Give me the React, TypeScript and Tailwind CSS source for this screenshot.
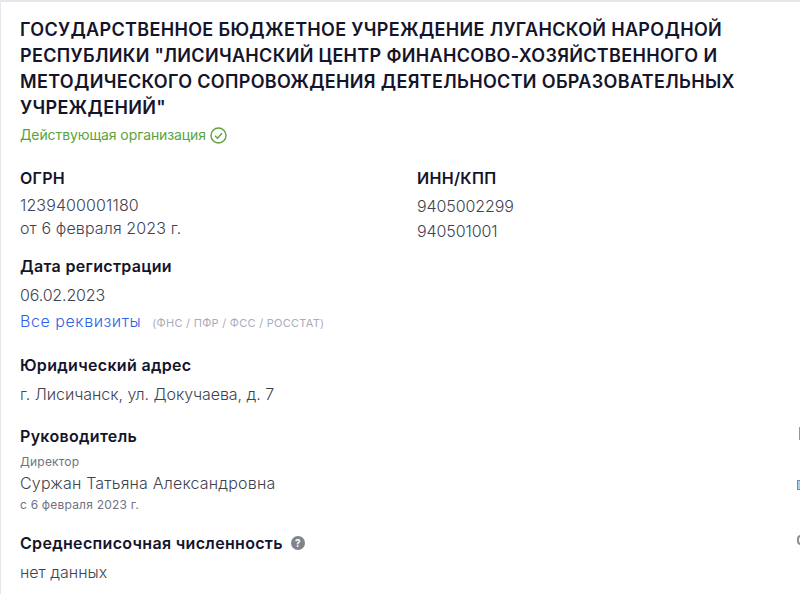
import React from 'react';

const Label: React.FC<{ children: React.ReactNode }> = ({ children }) => (
    <div className="text-[16px] leading-[20px] font-semibold tracking-[0.32px] text-[#14142b]">{children}</div>
);

const Value: React.FC<{ children: React.ReactNode; className?: string }> = ({ children, className }) => (
    <div className={`text-[16px] leading-[25px] font-light text-[#3f4350] ${className ?? ''}`}>{children}</div>
);

export default function App() {
    return (
        <div className="relative h-[594px] w-[800px] overflow-hidden bg-[#e4e7ec] pt-[2px] pl-[1px] font-['Inter',sans-serif]">
            <div className="h-full bg-white pl-[19px] pt-[15px]">
                <h1 className="w-[760px] text-[18px] leading-[26px] font-semibold tracking-[0.33px] text-[#14142b]">
                    ГОСУДАРСТВЕННОЕ БЮДЖЕТНОЕ УЧРЕЖДЕНИЕ ЛУГАНСКОЙ НАРОДНОЙ РЕСПУБЛИКИ "ЛИСИЧАНСКИЙ ЦЕНТР ФИНАНСОВО-ХОЗЯЙСТВЕННОГО И МЕТОДИЧЕСКОГО СОПРОВОЖДЕНИЯ ДЕЯТЕЛЬНОСТИ ОБРАЗОВАТЕЛЬНЫХ УЧРЕЖДЕНИЙ"
                </h1>
                <div className="mt-[4px] flex items-center gap-[4px] text-[14px] leading-[20px] tracking-[-0.1px] text-[#5aa33c]">
                    <span>Действующая организация</span>
                    <svg width="17" height="17" viewBox="0 0 17 17" fill="none" stroke="#5aa33c" strokeWidth="1.4">
                        <circle cx="8.5" cy="8.5" r="7.5" />
                        <path d="M5 8.7l2.5 2.5L12 6.3" />
                    </svg>
                </div>

                <div className="mt-[23px] flex">
                    <div className="w-[397px]">
                        <Label>ОГРН</Label>
                        <div className="mt-[6px] text-[16px] leading-[23px] font-light tracking-[0.12px] text-[#3f4350]">
                            <div>1239400001180</div>
                            <div>от 6 февраля 2023 г.</div>
                        </div>
                    </div>
                    <div>
                        <Label>ИНН/КПП</Label>
                        <div className="mt-[6px] text-[16px] leading-[25px] font-light tracking-[-0.1px] text-[#3f4350]">
                            <div>9405002299</div>
                            <div>940501001</div>
                        </div>
                    </div>
                </div>

                <div className="mt-[12px]">
                    <Label>Дата регистрации</Label>
                    <div className="mt-[7px]"><Value className="tracking-[-0.15px]">06.02.2023</Value></div>
                    <div className="mt-[1px] flex items-baseline gap-[11px]">
                        <span className="text-[16px] leading-[24px] font-light tracking-[0.55px] text-[#2f63e6]">Все реквизиты</span>
                        <span className="text-[11px] tracking-[0.27px] text-[#a9adb8]">(ФНС / ПФР / ФСС / РОССТАТ)</span>
                    </div>
                </div>

                <div className="mt-[22px]">
                    <Label>Юридический адрес</Label>
                    <div className="mt-[7px]"><Value className="tracking-[-0.05px]">г. Лисичанск, ул. Докучаева, д. 7</Value></div>
                </div>

                <div className="mt-[19px]">
                    <Label>Руководитель</Label>
                    <div className="mt-[8px] text-[12px] leading-[16px] tracking-[0.2px] text-[#6f7380]">Директор</div>
                    <div className="text-[16px] leading-[27px] font-light tracking-[0.18px] text-[#3f4350]">Суржан Татьяна Александровна</div>
                    <div className="text-[12px] leading-[16px] tracking-[0.2px] text-[#6f7380]">с 6 февраля 2023 г.</div>
                </div>

                <div className="mt-[20px]">
                    <div className="flex items-center gap-[8px]">
                        <Label>Среднесписочная численность</Label>
                        <span className="flex h-[14px] w-[14px] items-center justify-center rounded-full bg-[#80848f] text-[10px] leading-none font-bold text-white">?</span>
                    </div>
                    <div className="mt-[7px]"><Value>нет данных</Value></div>
                </div>
            </div>

            <div className="absolute top-[427px] left-[799px] h-[13px] w-[1px] bg-[#b58f72]" />
            <div className="absolute top-[480px] left-[797px] h-[10px] w-[4px] border border-[#7d8aa5] bg-[#a9cdf0]" />
            <div className="absolute top-[535px] left-[797px] h-[10px] w-[8px] rounded-full border-2 border-[#8a8f9c]" />
        </div>
    );
}
